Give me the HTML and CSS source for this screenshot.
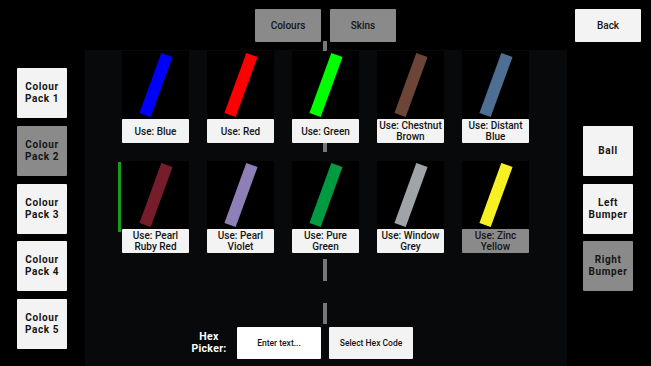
FILE: index.html
```html
<!DOCTYPE html>
<html lang="en">
<head>
    <meta charset="UTF-8">
    <meta name="viewport" content="width=device-width, initial-scale=1.0">
    <title>Colours</title>
    <link rel="stylesheet" href="styles.css">
</head>
<body>
    <div class="screen">
        <div class="topbar">
            <div></div>
            <div class="tabs">
                <button class="btn tab dim">Colours</button>
                <button class="btn tab dim">Skins</button>
                <span class="stem"></span>
            </div>
            <div class="back-wrap">
                <button class="btn back">Back</button>
            </div>
        </div>

        <div class="main">
            <div class="packs">
                <button class="btn square">Colour<br>Pack 1</button>
                <button class="btn square dim">Colour<br>Pack 2</button>
                <button class="btn square">Colour<br>Pack 3</button>
                <button class="btn square">Colour<br>Pack 4</button>
                <button class="btn square">Colour<br>Pack 5</button>
            </div>

            <div class="panel">
                <div class="grid">
                    <div class="card">
                        <div class="swatch"><span class="bar" style="background:#0000ff"></span></div>
                        <button class="btn use">Use: Blue</button>
                    </div>
                    <div class="card">
                        <div class="swatch"><span class="bar" style="background:#ff0000"></span></div>
                        <button class="btn use">Use: Red</button>
                    </div>
                    <div class="card">
                        <div class="swatch"><span class="bar" style="background:#00ff00"></span></div>
                        <button class="btn use">Use: Green</button>
                    </div>
                    <div class="card">
                        <div class="swatch"><span class="bar" style="background:#6d4438"></span></div>
                        <button class="btn use">Use: Chestnut Brown</button>
                    </div>
                    <div class="card">
                        <div class="swatch"><span class="bar" style="background:#4e6e94"></span></div>
                        <button class="btn use">Use: Distant Blue</button>
                    </div>

                    <div class="card selected">
                        <div class="swatch"><span class="bar" style="background:#771c2a"></span></div>
                        <button class="btn use">Use: Pearl Ruby Red</button>
                    </div>
                    <div class="card">
                        <div class="swatch"><span class="bar" style="background:#8e80b6"></span></div>
                        <button class="btn use">Use: Pearl Violet</button>
                    </div>
                    <div class="card">
                        <div class="swatch"><span class="bar" style="background:#009a40"></span></div>
                        <button class="btn use">Use: Pure Green</button>
                    </div>
                    <div class="card">
                        <div class="swatch"><span class="bar" style="background:#a0a4a8"></span></div>
                        <button class="btn use">Use: Window Grey</button>
                    </div>
                    <div class="card">
                        <div class="swatch"><span class="bar" style="background:#f7f022"></span></div>
                        <button class="btn use dim">Use: Zinc Yellow</button>
                    </div>
                </div>

                <div class="hex-row">
                    <div class="hex-label">Hex<br>Picker:</div>
                    <input class="hex-input" type="text" placeholder="Enter text...">
                    <button class="btn hex-btn">Select Hex Code</button>
                </div>
            </div>

            <div class="parts">
                <button class="btn square">Ball</button>
                <button class="btn square">Left<br>Bumper</button>
                <button class="btn square dim">Right<br>Bumper</button>
            </div>
        </div>
    </div>
</body>
</html>
```

FILE: styles.css
```css
* {
    box-sizing: border-box;
}
body {
    margin: 0;
    background-color: #000;
    font-family: Roboto, "Liberation Sans", sans-serif;
}
.screen {
    width: 651px;
    height: 366px;
    overflow: hidden;
}
.btn {
    border: none;
    border-radius: 1px;
    background-color: #f3f3f3;
    color: #151515;
    font-family: Roboto, "Liberation Sans", sans-serif;
    padding: 0;
    cursor: pointer;
}
.btn.dim {
    background-color: #8a8a8a;
}

/* top bar */
.topbar {
    display: grid;
    grid-template-columns: 1fr auto 1fr;
    height: 50px;
    padding-top: 9px;
}
.tabs {
    display: flex;
    gap: 9px;
    position: relative;
    height: 33px;
}
.tab {
    width: 66px;
    height: 33px;
    font-size: 10px;
    font-weight: 500;
}
.stem {
    position: absolute;
    left: 68px;
    top: 32px;
    width: 4px;
    height: 10px;
    background-color: #777;
}
.back-wrap {
    display: flex;
    justify-content: flex-end;
    padding-right: 10px;
}
.back {
    width: 66px;
    height: 33px;
    font-size: 10px;
    font-weight: 500;
}

/* main area */
.main {
    display: flex;
    height: 316px;
}
.packs {
    display: flex;
    flex-direction: column;
    gap: 7.75px;
    width: 50px;
    margin-left: 17px;
    padding-top: 18px;
}
.parts {
    display: flex;
    flex-direction: column;
    gap: 7.5px;
    width: 50px;
    margin-left: 16px;
    padding-top: 76px;
}
.square {
    width: 50px;
    height: 50px;
    font-size: 10px;
    font-weight: 700;
    letter-spacing: 0.6px;
    line-height: 12px;
}

.panel {
    width: 482px;
    margin-left: 18px;
    display: flex;
    flex-direction: column;
    background:
        linear-gradient(#777, #777) 238px 93px / 4px 9px no-repeat,
        linear-gradient(#777, #777) 238px 209px / 4px 22px no-repeat,
        linear-gradient(#777, #777) 238px 253px / 4px 21px no-repeat,
        #08090a;
}
.grid {
    display: grid;
    grid-template-columns: repeat(5, 67px);
    column-gap: 18px;
    row-gap: 18px;
    padding: 1px 0 0 37px;
}
.card {
    position: relative;
    display: flex;
    flex-direction: column;
    height: 92px;
}
.card.selected::before {
    content: "";
    position: absolute;
    left: -4px;
    top: 1px;
    width: 3px;
    height: 70px;
    background-color: #1a9a1a;
}
.swatch {
    height: 68px;
    background-color: #000;
    display: flex;
    align-items: center;
    justify-content: center;
}
.bar {
    display: block;
    width: 12px;
    height: 64px;
    transform: rotate(20deg);
}
.use {
    height: 24px;
    font-size: 10px;
    font-weight: 500;
    line-height: 11px;
}

/* hex picker */
.hex-row {
    display: flex;
    align-items: center;
    gap: 8px;
    margin-top: auto;
    margin-bottom: 7px;
    padding-left: 104px;
}
.hex-label {
    width: 40px;
    color: #fff;
    font-size: 10.5px;
    font-weight: 700;
    line-height: 12px;
    text-align: center;
    letter-spacing: 0.3px;
}
.hex-input {
    width: 84px;
    height: 32px;
    border: none;
    border-radius: 1px;
    background-color: #fff;
    font-family: Roboto, "Liberation Sans", sans-serif;
    font-size: 8.5px;
    font-weight: 500;
    text-align: center;
    padding: 0;
}
.hex-input::placeholder {
    color: #151515;
}
.hex-btn {
    width: 84px;
    height: 32px;
    font-size: 8.5px;
    font-weight: 500;
}
```
